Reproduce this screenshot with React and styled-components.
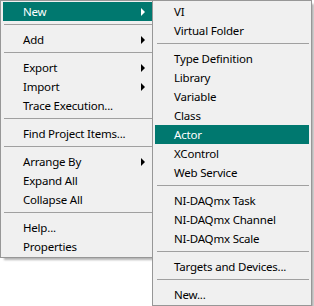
import React from "react";
import styled, { createGlobalStyle } from "styled-components";

const Global = createGlobalStyle`
  html, body { margin: 0; padding: 0; background: #ffffff; }
  body { font-family: "Noto Sans", "Open Sans", sans-serif; }
`;

const Stage = styled.div`
  position: relative;
  width: 314px;
  height: 306px;
  overflow: hidden;
`;

const Menu = styled.div`
  box-sizing: border-box;
  width: ${(p) => p.$width}px;
  background: #f0f0f0;
  border: 1px solid #979797;
  padding: 1px 2px;
  box-shadow: 3px 3px 2px -1px rgba(0, 0, 0, 0.3);
  display: flex;
  flex-direction: column;
`;

const SubMenu = styled(Menu)`
  position: absolute;
  left: 152px;
  top: 0;
`;

const Item = styled.div`
  height: 19px;
  display: flex;
  align-items: center;
  padding-left: ${(p) => p.$indent}px;
  padding-right: 8px;
  font-size: 11.5px;
  letter-spacing: -0.2px;
  color: ${(p) => (p.$active ? "#ffffff" : "#000000")};
  background: ${(p) => (p.$active ? "#00786f" : "transparent")};
  white-space: nowrap;
`;

const Label = styled.span`
  flex: 1;
  line-height: 19px;
`;

const Arrow = styled.span`
  width: 0;
  height: 0;
  border-top: 4px solid transparent;
  border-bottom: 4px solid transparent;
  border-left: 4px solid ${(p) => (p.$active ? "#ffffff" : "#000000")};
`;

const Separator = styled.div`
  height: 9px;
  display: flex;
  flex-direction: column;
  padding: 3px 0 0 ${(p) => p.$inset}px;
  box-sizing: border-box;
  &::before {
    content: "";
    height: 1px;
    background: #a0a0a0;
  }
`;

const leftItems = [
  { t: "New", sub: true, active: true },
  "-",
  { t: "Add", sub: true },
  "-",
  { t: "Export", sub: true },
  { t: "Import", sub: true },
  { t: "Trace Execution..." },
  "-",
  { t: "Find Project Items..." },
  "-",
  { t: "Arrange By", sub: true },
  { t: "Expand All" },
  { t: "Collapse All" },
  "-",
  { t: "Help..." },
  { t: "Properties" },
];

const rightItems = [
  { t: "VI" },
  { t: "Virtual Folder" },
  "-",
  { t: "Type Definition" },
  { t: "Library" },
  { t: "Variable" },
  { t: "Class" },
  { t: "Actor", active: true },
  { t: "XControl" },
  { t: "Web Service" },
  "-",
  { t: "NI-DAQmx Task" },
  { t: "NI-DAQmx Channel" },
  { t: "NI-DAQmx Scale" },
  "-",
  { t: "Targets and Devices..." },
  "-",
  { t: "New..." },
];

function renderItems(items, indent, inset) {
  return items.map((it, i) =>
    it === "-" ? (
      <Separator key={i} $inset={inset} />
    ) : (
      <Item key={i} $active={it.active} $indent={indent}>
        <Label>{it.t}</Label>
        {it.sub && <Arrow $active={it.active} />}
      </Item>
    )
  );
}

export default function App() {
  return (
    <>
      <Global />
      <Stage>
        <Menu $width={156}>{renderItems(leftItems, 20, 1)}</Menu>
        <SubMenu $width={160}>{renderItems(rightItems, 19, 2)}</SubMenu>
      </Stage>
    </>
  );
}
